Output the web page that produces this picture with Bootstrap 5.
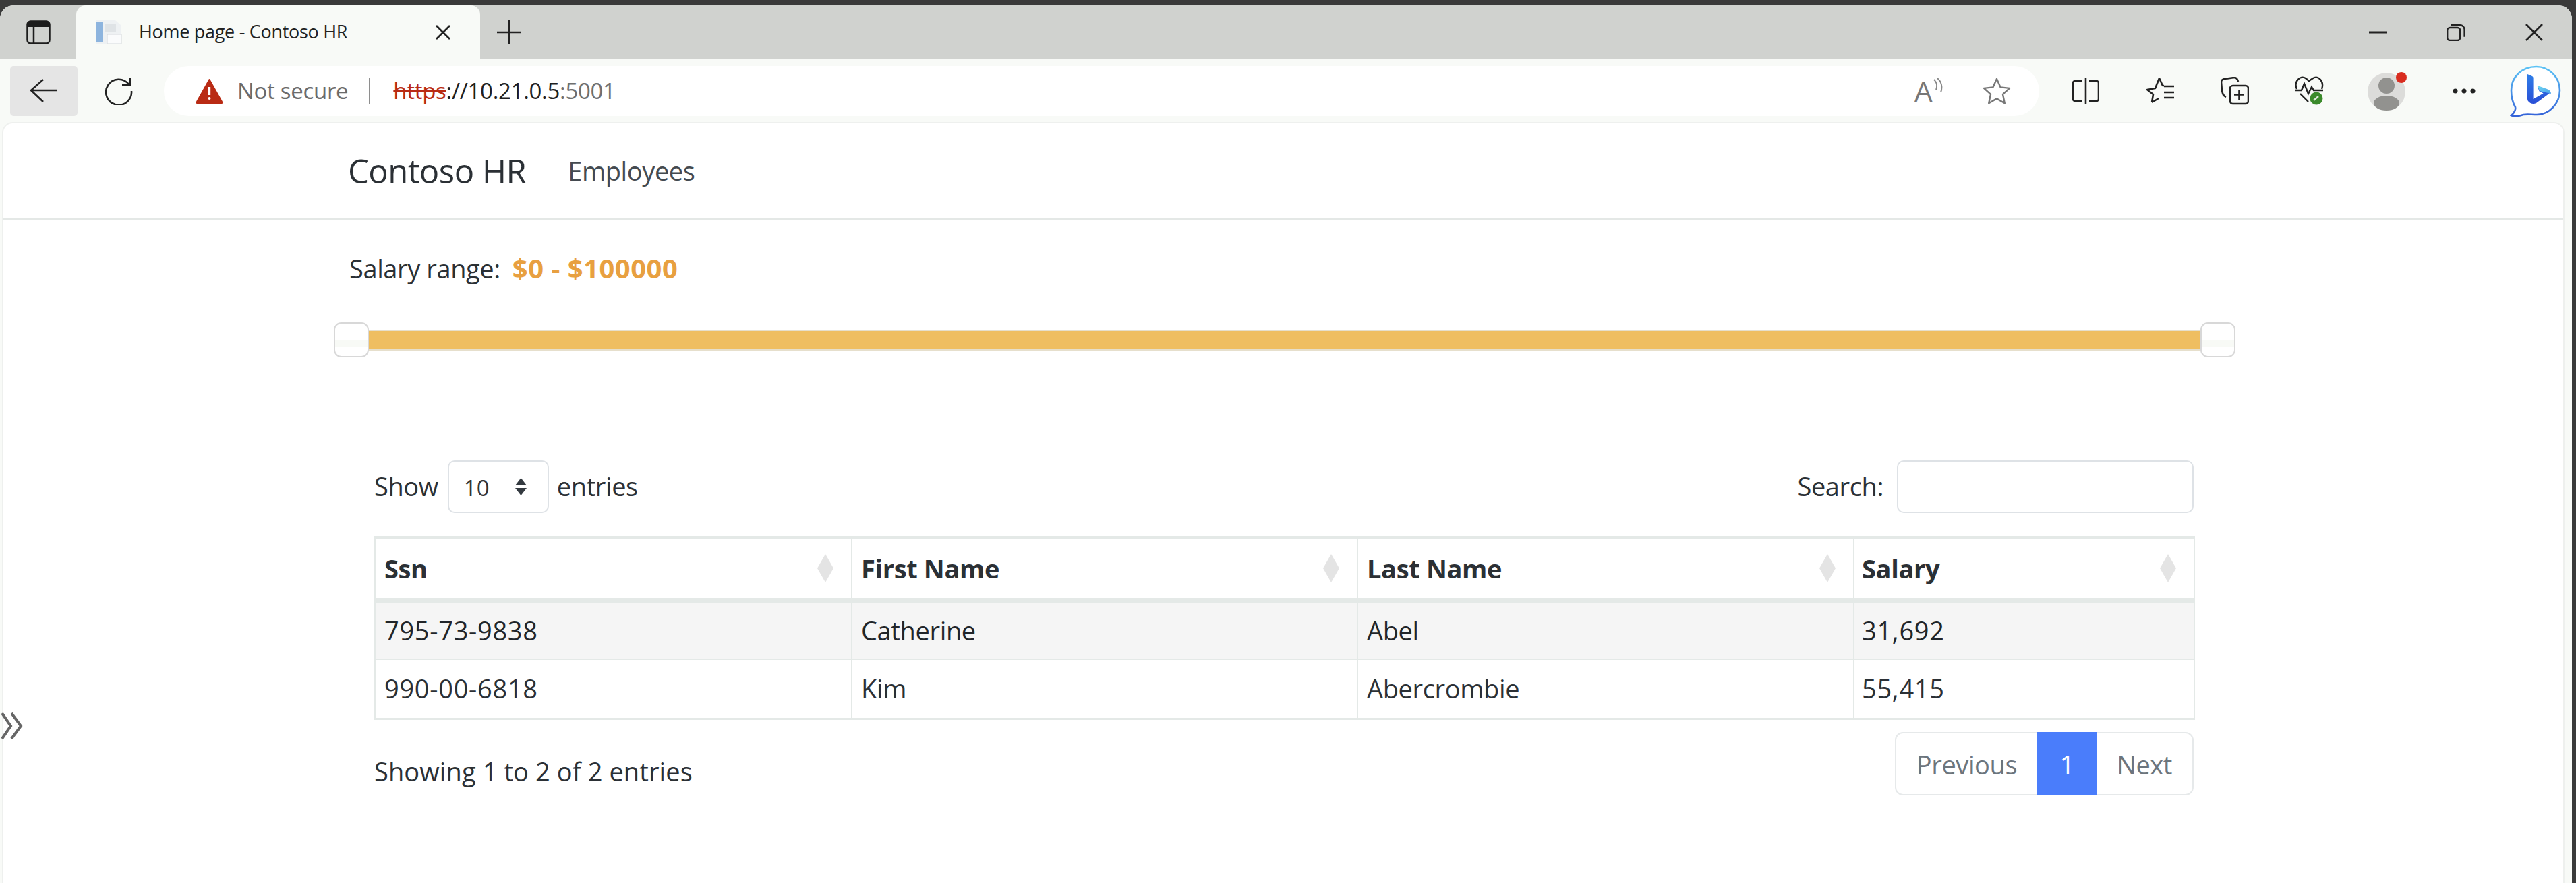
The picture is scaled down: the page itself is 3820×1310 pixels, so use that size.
<!DOCTYPE html>
<html lang="en">
<head>
  <meta charset="UTF-8">
  <title>Home page - Contoso HR</title>
  <link rel="stylesheet" href="https://cdn.jsdelivr.net/npm/bootstrap@5.3.0/dist/css/bootstrap.min.css">
  <style>
    html, body { height: 100%; }
    body { background: #3a3a3a; font-family: "Open Sans", "Liberation Sans", sans-serif; color: #2b3035; overflow: hidden; }
    svg { display: block; flex: none; }

    .browser { margin: 8px 6px 0 0; height: 1302px; background: #f8faf7; border-radius: 20px 20px 0 0; overflow: hidden; display: flex; flex-direction: column; }
    .tabstrip { height: 79px; background: #d0d2cf; flex: none; }
    .strip-left { width: 113px; height: 79px; }
    .tab-item { width: 599px; height: 79px; background: #f8faf7; border-radius: 14px 14px 0 0; padding-left: 28px; }
    .tab-title { font-size: 27px; letter-spacing: -.3px; color: #222; margin-left: 25px; width: 440px; white-space: nowrap; }
    .win-btns { margin-left: auto; padding-right: 43px; gap: 89px; }

    .toolbar { height: 94px; flex: none; padding: 11px 0 9px 15px; }
    .back-btn { width: 100px; height: 74px; background: #e5e5e5; border-radius: 5px; flex: none; }
    .reload-btn { width: 40px; margin-left: 40px; flex: none; }
    .addr-pill { width: 2781px; flex: none; height: 74px; margin-left: 48px; background: #fff; border-radius: 37px; padding-left: 47px; }
    .addr-warn { font-size: 33px; color: #6b6b6b; margin-left: 21px; letter-spacing: -.3px; }
    .addr-sep { width: 2px; height: 40px; background: #8e8e8e; margin: 0 34px 0 31px; }
    .addr-url { font-size: 33px; color: #1f1f1f; letter-spacing: -.3px; white-space: nowrap; }
    .addr-url s { color: #b92b14; }
    .addr-url span { color: #6f6f6f; }
    .addr-right { margin-left: auto; padding-right: 42px; gap: 59px; }
    .read-glyph { font-size: 42px; line-height: 40px; color: #777; width: 28px; }
    .tool-icons { margin-left: 49px; gap: 68px; flex: none; }
    .tool-split { margin-right: 2px; }
    .tool-health { margin-right: -4px; }
    .tool-more { margin-right: -17px; }

    .page-area { flex: 1; background: #fff; margin: 0 11px 0 3px; border: 2px solid #eef0ee; border-bottom: 0; border-radius: 16px 16px 0 0; position: relative; min-height: 0; }
    .hr-nav.navbar { height: 145px; padding: 3px 0 0 511px; border-bottom: 3px solid #e4e8e6; margin-top: -2px; }
    .hr-nav .navbar-brand { font-size: 49px; color: #2b3035; padding: 0; margin: 0 54px 0 0; letter-spacing: -.5px; }
    .hr-nav .nav-link { font-size: 38px; color: #444a50; padding: 0; letter-spacing: -.4px; }

    .salary-line { margin: 43px 0 0 513px; font-size: 38px; line-height: 58px; letter-spacing: -.4px; }
    .salary-line b { color: #e8a040; margin-left: 18px; font-size: 40px; letter-spacing: .5px; }

    .range-row { margin: 51px 0 0 490px; width: 2820px; height: 52px; }
    .range-handle { width: 52px; height: 52px; flex: none; background: linear-gradient(#fff 0 50%, #f8faf6 50% 72%, #fff 72%); border: 2px solid #d8d8d8; border-radius: 11px; }
    .range-track { flex: 1; height: 31px; background: #efbe61; border-top: 2px solid #e6dfcc; border-bottom: 2px solid #e6dfcc; }

    .emp-block { margin: 152px 0 0 550px; width: 2698px; }
    .emp-top { height: 79px; font-size: 38px; letter-spacing: -.4px; }
    .emp-top .form-select { width: 150px; height: 78px; font-size: 33px; padding: 4px 0 0 22px; margin: 0 12px 0 14px; border: 2px solid #dee2e6; border-radius: 10px; background-image: none; color: #333; }
    .len-wrap { position: relative; display: block; }
    .len-arrows { position: absolute; right: 43px; top: 26px; }
    .emp-top .form-control { width: 440px; height: 78px; margin-left: 20px; border: 2px solid #dee2e6; border-radius: 10px; }

    .emp-table.table { margin: 34px 0 0; width: 2698px; table-layout: fixed; font-size: 38px; letter-spacing: -.35px; border-color: #e4e9e7; --bs-table-striped-bg: #f5f5f5; --bs-table-accent-bg: transparent; }
    .emp-table th, .emp-table td { border: 2px solid #e4e9e7; padding: 0 0 0 13px; vertical-align: middle; color: #2b3035; }
    .emp-table th { height: 93px; border-top-width: 5px; border-bottom-width: 8px; font-weight: 700; padding-right: 26px; }
    .emp-table td { height: 87px; }
    .emp-table th:last-child, .emp-table td:last-child { padding-left: 11px; }
    .emp-table tbody tr:last-child td { height: 89px; border-bottom-width: 3px; }
    .emp-table .digit-cell { letter-spacing: .7px; }
    .sort-mark { fill: #e4e4e4; }

    .emp-foot { margin-top: 18px; font-size: 38px; letter-spacing: .1px; }
    .foot-info { line-height: 58px; margin-top: 29px; }
    .emp-foot .pagination { margin: 0; --bs-pagination-font-size: 38px; --bs-pagination-border-width: 2px; --bs-pagination-border-color: #e6e9ea; --bs-pagination-border-radius: 12px; --bs-pagination-active-bg: #4a7dfb; --bs-pagination-active-border-color: #4a7dfb; --bs-pagination-disabled-color: #6c757d; --bs-pagination-disabled-bg: #fff; --bs-pagination-disabled-border-color: #e6e9ea; --bs-pagination-color: #6c757d; }
    .emp-foot .page-link { height: 94px; padding: 18px 30px 0; line-height: 56px; letter-spacing: -.4px; }
    .emp-foot .page-item:not(:first-child) .page-link { margin-left: -2px; }
    .page-1 .page-link { width: 88px; text-align: center; padding: 18px 0 0; border-radius: 0; }
    .collapse-mark { position: absolute; left: -5px; top: 874px; }
  </style>
</head>
<body>
  <div class="browser">
    <div class="tabstrip d-flex align-items-center">
      <div class="strip-left d-flex align-items-center justify-content-center">
        <svg width="36" height="36" viewBox="0 0 36 36"><rect x="1.5" y="1.5" width="33" height="33" rx="5" fill="none" stroke="#1c1c1c" stroke-width="2.5"/><path d="M2 10V6a4 4 0 0 1 4-4h24a4 4 0 0 1 4 4v4z" fill="#1c1c1c"/><path d="M11 10v24" stroke="#1c1c1c" stroke-width="2.5"/></svg>
      </div>
      <div class="tab-item d-flex align-items-center">
        <svg width="40" height="38" viewBox="0 0 40 38"><path d="M2 1h28l9 8v28H2z" fill="#eef1f3"/><rect x="2" y="3" width="9" height="31" fill="#8db4de"/><rect x="15" y="6" width="16" height="12" fill="#dfe3e6"/><rect x="18" y="22" width="21" height="14" fill="#fafbfc" stroke="#d4d8dc"/></svg>
        <div class="tab-title">Home page - Contoso HR</div>
        <svg width="22" height="22" viewBox="0 0 22 22"><path d="M1 1l20 20M21 1L1 21" stroke="#222" stroke-width="2.6"/></svg>
      </div>
      <svg class="ms-4" width="38" height="38" viewBox="0 0 38 38"><path d="M19 1v36M1 19h36" stroke="#222" stroke-width="2.6"/></svg>
      <div class="win-btns d-flex align-items-center">
        <svg width="26" height="26" viewBox="0 0 26 26"><path d="M0 13h26" stroke="#222" stroke-width="3"/></svg>
        <svg width="28" height="26" viewBox="0 0 28 26"><rect x="1.2" y="6" width="19" height="19" rx="4" fill="none" stroke="#222" stroke-width="2.4"/><path d="M7 2.2h13a6.5 6.5 0 0 1 6.6 6.5v11" fill="none" stroke="#222" stroke-width="2.4"/></svg>
        <svg width="26" height="26" viewBox="0 0 26 26"><path d="M1 1l24 24M25 1L1 25" stroke="#222" stroke-width="2.6"/></svg>
      </div>
    </div>

    <div class="toolbar d-flex align-items-center">
      <div class="back-btn d-flex align-items-center justify-content-center">
        <svg width="42" height="36" viewBox="0 0 42 36"><path d="M41 17H2M20 1L2 17l18 17" fill="none" stroke="#222" stroke-width="2.6"/></svg>
      </div>
      <div class="reload-btn">
        <svg width="42" height="42" viewBox="0 0 42 42"><path d="M36 11A19 19 0 1 0 40 21" fill="none" stroke="#222" stroke-width="2.6"/><path d="M38 1v11H26" fill="none" stroke="#222" stroke-width="2.6"/></svg>
      </div>
      <div class="addr-pill d-flex align-items-center">
        <svg width="41" height="39" viewBox="0 0 41 39"><path d="M20.5 2L39 35a1.5 1.5 0 0 1-1 2.5H3A1.5 1.5 0 0 1 2 35z" fill="#b92b14" stroke="#b92b14" stroke-width="2" stroke-linejoin="round"/><path d="M20.5 13v12" stroke="#fff" stroke-width="3.4"/><circle cx="20.5" cy="30" r="2" fill="#fff"/></svg>
        <div class="addr-warn">Not secure</div>
        <div class="addr-sep"></div>
        <div class="addr-url"><s>https</s>://10.21.0.5<span>:5001</span></div>
        <div class="addr-right d-flex align-items-center">
          <div class="d-flex align-items-start">
            <div class="read-glyph">A</div>
            <svg width="14" height="26" viewBox="0 0 14 26"><path d="M1 3c4 4 5 10 3 15M6 1c6 5 8 13 5 21" fill="none" stroke="#888" stroke-width="2"/></svg>
          </div>
          <svg width="42" height="40" viewBox="0 0 42 40"><path d="M21 2l5.600 12.400 13.400 1.500-10 9 2.800 13.300L21 31.400 9.200 38.200 12 24.900l-10-9 13.400-1.500z" fill="none" stroke="#777" stroke-width="2.400" stroke-linejoin="round"/></svg>
        </div>
      </div>
      <div class="tool-icons d-flex align-items-center">
        <svg class="tool-split" width="40" height="42" viewBox="0 0 40 42"><path d="M15 6H4a3 3 0 0 0-3 3v24a3 3 0 0 0 3 3h11M25 6h11a3 3 0 0 1 3 3v24a3 3 0 0 1-3 3H25M20 1v40" fill="none" stroke="#222" stroke-width="2.6"/></svg>
        <svg width="42" height="42" viewBox="0 0 42 42"><path d="M19 2l5 11h2M8 38l2-12-9-7 12-2 6-15M8 38l10-6" fill="none" stroke="#222" stroke-width="2.6" stroke-linejoin="round"/><path d="M26 14h15M26 23h15M26 31h15" stroke="#222" stroke-width="2.6"/></svg>
        <svg width="42" height="42" viewBox="0 0 42 42"><path d="M8 30C4 28 3 26 2 20L1 8c0-3 2-5 5-5l14-2c3 0 5 2 6 6" fill="none" stroke="#222" stroke-width="2.6"/><rect x="14" y="13" width="27" height="27" rx="4" fill="none" stroke="#222" stroke-width="2.6"/><path d="M27.500 19v15M20 26.500h15" stroke="#222" stroke-width="2.6"/></svg>
        <svg class="tool-health" width="44" height="44" viewBox="0 0 44 44"><path d="M3 19C-2 8 8-2 16 3l5 4 6-4c8-5 17 5 13 16" fill="none" stroke="#222" stroke-width="2.4"/><path d="M0 21h10l4-10 6 15 5-10 3 5h14" fill="none" stroke="#222" stroke-width="2.4"/><path d="M8 26l12 12" stroke="#222" stroke-width="2.4"/><circle cx="32" cy="33" r="9.500" fill="#3b8a2b"/><path d="M28 36l7-6" stroke="#dfe9dc" stroke-width="2.400"/></svg>
        <svg width="58" height="58" viewBox="0 0 58 58"><circle cx="28" cy="30" r="28" fill="#dcdcda"/><circle cx="28" cy="21" r="12" fill="#92928f"/><ellipse cx="28" cy="47" rx="19" ry="11" fill="#92928f"/><circle cx="50" cy="9" r="8" fill="#d92c1f"/></svg>
        <svg class="tool-more" width="34" height="8" viewBox="0 0 34 8"><circle cx="4" cy="4" r="3.500" fill="#222"/><circle cx="17" cy="4" r="3.500" fill="#222"/><circle cx="30" cy="4" r="3.500" fill="#222"/></svg>
        <svg width="76" height="76" viewBox="0 0 76 76">
          <defs>
            <linearGradient id="bingBody" x1="0" y1="0" x2="0" y2="1"><stop offset="0" stop-color="#2f7ee8"/><stop offset="1" stop-color="#2a4fd6"/></linearGradient>
            <linearGradient id="bingRim" x1="0" y1="0" x2="0" y2="1"><stop offset="0" stop-color="#5bc2f5"/><stop offset="1" stop-color="#3563d8"/></linearGradient>
            <linearGradient id="bingWing" x1="0" y1="0" x2="1" y2="1"><stop offset="0" stop-color="#6fd8f2"/><stop offset="1" stop-color="#4aa0ea"/></linearGradient>
          </defs>
          <path d="M39 2c20 0 35 16 35 35S59 73 40 73c-8 0-14-1-20 0-6 2-14 3-18 1 4-3 7-8 6-12C4 55 2 47 2 37 2 17 18 2 39 2z" fill="#fff" stroke="url(#bingRim)" stroke-width="2.600"/>
          <path d="M26 13l7 3c1 .5 1.600 1.400 1.600 2.500V50l15-8.500c-2-1-6-3-6-3l-3-8 16 6c3 1 3 3 2 5L39 56c-4 2-9 1-12-3-1-1-1-3-1-5z" fill="url(#bingBody)"/>
          <path d="M41 30l14 5c4 1.500 6 4 6 7L44 38z" fill="url(#bingWing)"/>
        </svg>
      </div>
    </div>

    <div class="page-area">
      <nav class="navbar navbar-expand hr-nav">
        <a class="navbar-brand" href="#">Contoso HR</a>
        <ul class="navbar-nav">
          <li class="nav-item"><a class="nav-link" href="#">Employees</a></li>
        </ul>
      </nav>

      <div class="salary-line">Salary range:<b>$0 - $100000</b></div>

      <div class="range-row d-flex align-items-center">
        <div class="range-handle"></div>
        <div class="range-track"></div>
        <div class="range-handle"></div>
      </div>

      <div class="emp-block">
        <div class="emp-top d-flex justify-content-between align-items-center">
          <div class="d-flex align-items-center">
            Show
            <span class="len-wrap">
              <select class="form-select"><option>10</option></select>
              <svg class="len-arrows" width="21" height="26" viewBox="0 0 21 26"><path d="M10.500 0l8.500 11H2zM10.500 26l8.500-11H2z" fill="#343a40"/></svg>
            </span>
            entries
          </div>
          <div class="d-flex align-items-center">
            Search:
            <input class="form-control" type="search">
          </div>
        </div>

        <table class="table table-bordered table-striped emp-table">
          <colgroup><col style="width:707px"><col style="width:750px"><col style="width:736px"><col style="width:505px"></colgroup>
          <thead>
            <tr>
              <th><div class="d-flex justify-content-between align-items-center">Ssn<svg width="24" height="42" viewBox="0 0 24 42"><path class="sort-mark" d="M12 0l12 21-12 21L0 21z"/></svg></div></th>
              <th><div class="d-flex justify-content-between align-items-center">First Name<svg width="24" height="42" viewBox="0 0 24 42"><path class="sort-mark" d="M12 0l12 21-12 21L0 21z"/></svg></div></th>
              <th><div class="d-flex justify-content-between align-items-center">Last Name<svg width="24" height="42" viewBox="0 0 24 42"><path class="sort-mark" d="M12 0l12 21-12 21L0 21z"/></svg></div></th>
              <th><div class="d-flex justify-content-between align-items-center">Salary<svg width="24" height="42" viewBox="0 0 24 42"><path class="sort-mark" d="M12 0l12 21-12 21L0 21z"/></svg></div></th>
            </tr>
          </thead>
          <tbody>
            <tr><td class="digit-cell">795-73-9838</td><td>Catherine</td><td>Abel</td><td class="digit-cell">31,692</td></tr>
            <tr><td class="digit-cell">990-00-6818</td><td>Kim</td><td>Abercrombie</td><td class="digit-cell">55,415</td></tr>
          </tbody>
        </table>

        <div class="emp-foot d-flex justify-content-between align-items-start">
          <div class="foot-info">Showing 1 to 2 of 2 entries</div>
          <ul class="pagination">
            <li class="page-item disabled"><a class="page-link" href="#">Previous</a></li>
            <li class="page-item active page-1"><a class="page-link" href="#">1</a></li>
            <li class="page-item disabled"><a class="page-link" href="#">Next</a></li>
          </ul>
        </div>
      </div>

      <svg class="collapse-mark" width="42" height="40" viewBox="0 0 42 40"><path d="M3 1l13 19L3 39M17 1l14 19-14 19" fill="none" stroke="#666" stroke-width="4"/></svg>
    </div>
  </div>
  <script src="https://cdn.jsdelivr.net/npm/bootstrap@5.3.0/dist/js/bootstrap.bundle.min.js"></script>
</body>
</html>
